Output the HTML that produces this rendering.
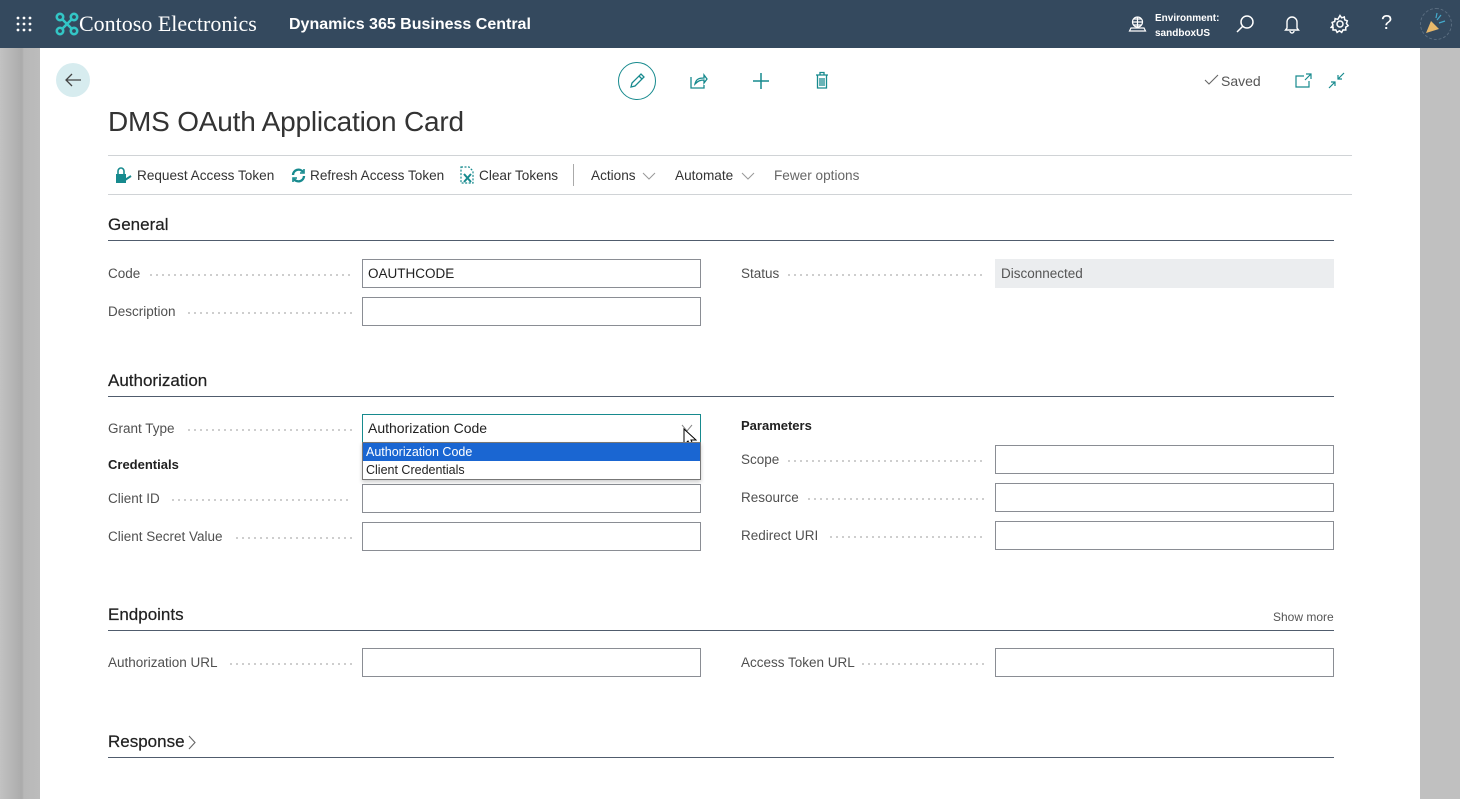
<!DOCTYPE html>
<html><head><meta charset="utf-8"><style>
*{box-sizing:border-box;margin:0;padding:0}
body{width:1460px;height:799px;overflow:hidden;font-family:"Liberation Sans",sans-serif;background:#bdbdbd;position:relative;color:#212121}
.top{position:absolute;left:0;top:0;width:1460px;height:48px;background:#34495e;color:#fff}
.lg{position:absolute;left:0;top:48px;width:40px;height:751px;background:linear-gradient(90deg,#c2c2c2,#ababab 55%,#b8b8b8 60%,#bcbcbc)}
.rg{position:absolute;left:1420px;top:48px;width:40px;height:751px;background:#c0c0c0}
.card{position:absolute;left:40px;top:48px;width:1380px;height:751px;background:#fff}
.a{position:absolute}
.lbl{position:absolute;font-size:13.5px;color:#505050;height:20px;line-height:20px}
.dots{position:absolute;height:2px;background-image:radial-gradient(circle,#c0c0c0 0.8px,transparent 1.1px);background-size:6px 2px}
.in{position:absolute;height:29px;border:1px solid #8a8d94;background:#fff;font-size:13.5px;line-height:27px;padding-left:5px;color:#212121}
.sec{position:absolute;left:108px;width:1226px;border-bottom:1.5px solid #505c6d;font-size:17px;color:#212121;padding-bottom:5px;-webkit-text-stroke:0.2px #212121}
.tb{position:absolute;top:167px;font-size:13.6px;color:#333;line-height:18px}
.ic{position:absolute}
</style></head><body>
<div class="top">
  <svg class="ic" style="left:15px;top:15px" width="18" height="18" viewBox="0 0 18 18" fill="#fff"><circle cx="3" cy="3" r="1.4"/><circle cx="9" cy="3" r="1.4"/><circle cx="15" cy="3" r="1.4"/><circle cx="3" cy="9" r="1.4"/><circle cx="9" cy="9" r="1.4"/><circle cx="15" cy="9" r="1.4"/><circle cx="3" cy="15" r="1.4"/><circle cx="9" cy="15" r="1.4"/><circle cx="15" cy="15" r="1.4"/></svg>
  <svg class="ic" style="left:55px;top:12px" width="24" height="24" viewBox="0 0 24 24" fill="none" stroke="#33c6c6" stroke-width="2.6"><circle cx="5" cy="5" r="3.2"/><circle cx="19" cy="5" r="3.2"/><circle cx="5" cy="19" r="3.2"/><circle cx="19" cy="19" r="3.2"/><path d="M7 7L17 17M17 7L7 17"/></svg>
  <div class="a" style="left:79px;top:11px;font-family:'Liberation Serif',serif;font-size:22px;color:#fff">Contoso Electronics</div>
  <div class="a" style="left:289px;top:16px;font-size:16px;font-weight:bold;color:#fff">Dynamics 365 Business Central</div>
  <svg class="ic" style="left:1128px;top:15px" width="19" height="18" viewBox="0 0 19 18" fill="none" stroke="#fff" stroke-width="1.2"><circle cx="9.5" cy="7" r="5"/><path d="M4.5 7h10M9.5 2v10M6 4h7M6 10h7M3 13h13l1.5 3h-16z"/></svg>
  <div class="a" style="left:1155px;top:11px;font-size:10px;font-weight:bold;line-height:15px;color:#fff">Environment:<br>sandboxUS</div>
  <svg class="ic" style="left:1235px;top:14px" width="20" height="20" viewBox="0 0 20 20" fill="none" stroke="#fff" stroke-width="1.5"><circle cx="12" cy="8" r="6"/><path d="M8 12L2 18"/></svg>
  <svg class="ic" style="left:1284px;top:14px" width="16" height="20" viewBox="0 0 16 20" fill="none" stroke="#fff" stroke-width="1.4"><path d="M3 14V8a5 5 0 0 1 10 0v6l1.5 2h-13z M6 17a2 2 0 0 0 4 0"/></svg>
  <svg class="ic" style="left:1330px;top:14px" width="20" height="20" viewBox="0 0 20 20" fill="none" stroke="#fff" stroke-width="1.5"><circle cx="10" cy="10" r="3"/><path d="M10 1.5l1.6 2.3 2.7-.8.4 2.8 2.6 1-.9 2.7 1.7 2.2-2.4 1.5.1 2.8-2.8-.1-1.3 2.5-2.3-1.6-2.3 1.6-1.3-2.5-2.8.1.1-2.8L1.3 13.3 3 11.1 2.1 8.4l2.6-1 .4-2.8 2.7.8z"/></svg>
  <div class="a" style="left:1381px;top:12px;font-size:20px;color:#fff">?</div>
  <div class="a" style="left:1420px;top:8px;width:32px;height:32px;border-radius:50%;border:1px dashed #5a6d80"></div>
  <svg class="ic" style="left:1424px;top:12px" width="24" height="24" viewBox="0 0 24 24"><path d="M2 21l5-12 8 8z" fill="#e8b86a"/><path d="M13 8l4-5M15 11l6-2M12 6l1-5" stroke="#4ac" stroke-width="1.2"/></svg>
</div>
<div class="lg"></div><div class="rg"></div>
<div class="card"></div>

<div class="a" style="left:56px;top:63px;width:34px;height:34px;border-radius:50%;background:#d7ecef"></div>
<svg class="ic" style="left:64px;top:71px" width="18" height="18" viewBox="0 0 18 18" fill="none" stroke="#444" stroke-width="1.3"><path d="M17 9H2M8 3L2 9l6 6"/></svg>

<div class="a" style="left:618px;top:62px;width:38px;height:38px;border-radius:50%;border:1.5px solid #178a8e"></div>
<svg class="ic" style="left:629px;top:72px" width="17" height="17" viewBox="0 0 17 17" fill="none" stroke="#178a8e" stroke-width="1.3"><path d="M2 15l1-4 9-9 3 3-9 9z M10 4l3 3"/></svg>
<svg class="ic" style="left:690px;top:72px" width="18" height="17" viewBox="0 0 18 17" fill="none" stroke="#178a8e" stroke-width="1.3"><path d="M1 5v11h13v-3M5 12c1-5 4-6 9-6V3l3 4-3 4V8c-4 0-6 1-9 4z"/></svg>
<svg class="ic" style="left:752px;top:72px" width="18" height="18" viewBox="0 0 18 18" stroke="#178a8e" stroke-width="1.5"><path d="M9 1v16M1 9h16"/></svg>
<svg class="ic" style="left:815px;top:71px" width="14" height="18" viewBox="0 0 14 18" fill="none" stroke="#178a8e" stroke-width="1.3"><path d="M1 4h12M5 4V1.5h4V4M2.5 4v13h9V4M5 7v8M7 7v8M9 7v8"/></svg>

<svg class="ic" style="left:1204px;top:74px" width="15" height="12" viewBox="0 0 15 12" fill="none" stroke="#666" stroke-width="1.1"><path d="M1 6l4 4 9-9"/></svg>
<div class="a" style="left:1221px;top:73px;font-size:14px;color:#555">Saved</div>
<svg class="ic" style="left:1295px;top:73px" width="17" height="15" viewBox="0 0 17 15" fill="none" stroke="#178a8e" stroke-width="1.2"><path d="M9 3H1v11h13V8M11 1h5v5M16 1l-6 6"/></svg>
<svg class="ic" style="left:1328px;top:72px" width="17" height="17" viewBox="0 0 17 17" fill="none" stroke="#178a8e" stroke-width="1.2"><path d="M16 1l-6 6M10 3v4h4M1 16l6-6M3 10h4v4"/></svg>

<div class="a" style="left:108px;top:106px;font-size:28px;color:#333;letter-spacing:-0.2px">DMS OAuth Application Card</div>

<div class="a" style="left:108px;top:155px;width:1244px;height:1px;background:#d0d3d6"></div>
<div class="a" style="left:108px;top:194px;width:1244px;height:1px;background:#d0d3d6"></div>
<svg class="ic" style="left:115px;top:167px" width="18" height="17" viewBox="0 0 18 17"><rect x="1" y="7" width="10" height="9" fill="#178a8e"/><path d="M3 7V4a3 3 0 0 1 6 0v3" fill="none" stroke="#178a8e" stroke-width="1.6"/><path d="M10 13l6-4" stroke="#178a8e" stroke-width="2"/></svg>
<div class="tb" style="left:137px">Request Access Token</div>
<svg class="ic" style="left:291px;top:168px" width="15" height="15" viewBox="0 0 15 15" fill="none" stroke="#178a8e" stroke-width="2.4"><path d="M2 7a5.5 5.5 0 0 1 10-3M13 8a5.5 5.5 0 0 1-10 3"/><path d="M13 1v4H9M2 14v-4h4" stroke-width="1.6"/></svg>
<div class="tb" style="left:310px">Refresh Access Token</div>
<svg class="ic" style="left:460px;top:166px" width="15" height="18" viewBox="0 0 15 18" fill="none" stroke="#178a8e" stroke-width="1.2"><path d="M1 1h8l4 4v12H1z" stroke-dasharray="2 1.5"/><path d="M4 8l7 8M11 8l-7 8" stroke-width="2"/></svg>
<div class="tb" style="left:479px">Clear Tokens</div>
<div class="a" style="left:573px;top:164px;width:1px;height:22px;background:#aaa"></div>
<div class="tb" style="left:591px">Actions</div>
<svg class="ic" style="left:642px;top:172px" width="14" height="8" viewBox="0 0 14 8" fill="none" stroke="#999"><path d="M1 1l6 6 6-6"/></svg>
<div class="tb" style="left:675px">Automate</div>
<svg class="ic" style="left:741px;top:172px" width="14" height="8" viewBox="0 0 14 8" fill="none" stroke="#999"><path d="M1 1l6 6 6-6"/></svg>
<div class="tb" style="left:774px;color:#666">Fewer options</div>

<div class="sec" style="top:215px">General</div>
<div class="lbl" style="left:108px;top:264px">Code</div><div class="dots" style="left:148px;top:274px;width:204px"></div>
<div class="in" style="left:362px;top:259px;width:339px">OAUTHCODE</div>
<div class="lbl" style="left:108px;top:302px">Description</div><div class="dots" style="left:186px;top:312px;width:166px"></div>
<div class="in" style="left:362px;top:297px;width:339px"></div>
<div class="lbl" style="left:741px;top:264px">Status</div><div class="dots" style="left:786px;top:274px;width:200px"></div>
<div class="in" style="left:995px;top:259px;width:339px;background:#ebedef;border-color:#ebedef;color:#555">Disconnected</div>

<div class="sec" style="top:371px">Authorization</div>
<div class="lbl" style="left:108px;top:419px">Grant Type</div><div class="dots" style="left:186px;top:429px;width:166px"></div>
<div class="in" style="left:362px;top:414px;width:339px;border-color:#178a8e;font-size:14px">Authorization Code</div>
<svg class="ic" style="left:681px;top:424px" width="12" height="10" viewBox="0 0 12 10" fill="none" stroke="#888"><path d="M1 1l5 6 5-6"/></svg>
<svg class="ic" style="left:683px;top:428px" width="14" height="22" viewBox="0 0 14 22"><path d="M1 1v16l4-4 3 7 3-1-3-7h5z" fill="#fff" stroke="#000" stroke-width="1"/></svg>
<div class="lbl" style="left:108px;top:455px;font-weight:bold;color:#212121;font-size:13px">Credentials</div>
<div class="lbl" style="left:108px;top:489px">Client ID</div><div class="dots" style="left:170px;top:499px;width:182px"></div>
<div class="in" style="left:362px;top:484px;width:339px"></div>
<div class="lbl" style="left:108px;top:527px">Client Secret Value</div><div class="dots" style="left:234px;top:537px;width:118px"></div>
<div class="in" style="left:362px;top:522px;width:339px"></div>
<div class="a" style="left:362px;top:442px;width:339px;height:38px;border:1px solid #777;background:#fff;box-shadow:0 2px 4px rgba(0,0,0,.2);font-size:12.5px">
  <div style="background:#1a66d2;color:#fff;height:18px;line-height:18px;padding-left:3px">Authorization Code</div>
  <div style="height:18px;line-height:18px;padding-left:3px;color:#222">Client Credentials</div>
</div>
<div class="lbl" style="left:741px;top:416px;font-weight:bold;color:#212121;font-size:13px">Parameters</div>
<div class="lbl" style="left:741px;top:450px">Scope</div><div class="dots" style="left:786px;top:460px;width:200px"></div>
<div class="in" style="left:995px;top:445px;width:339px"></div>
<div class="lbl" style="left:741px;top:488px">Resource</div><div class="dots" style="left:806px;top:498px;width:180px"></div>
<div class="in" style="left:995px;top:483px;width:339px"></div>
<div class="lbl" style="left:741px;top:526px">Redirect URI</div><div class="dots" style="left:828px;top:536px;width:158px"></div>
<div class="in" style="left:995px;top:521px;width:339px"></div>

<div class="sec" style="top:605px">Endpoints</div>
<div class="a" style="left:1273px;top:610px;font-size:12px;color:#555">Show more</div>
<div class="lbl" style="left:108px;top:653px">Authorization URL</div><div class="dots" style="left:228px;top:663px;width:124px"></div>
<div class="in" style="left:362px;top:648px;width:339px"></div>
<div class="lbl" style="left:741px;top:653px">Access Token URL</div><div class="dots" style="left:860px;top:663px;width:126px"></div>
<div class="in" style="left:995px;top:648px;width:339px"></div>

<div class="sec" style="top:732px;width:1226px">Response</div>
<svg class="ic" style="left:188px;top:735px" width="9" height="15" viewBox="0 0 9 15" fill="none" stroke="#666" stroke-width="1.1"><path d="M1 1l6 6.5L1 14"/></svg>
</body></html>
